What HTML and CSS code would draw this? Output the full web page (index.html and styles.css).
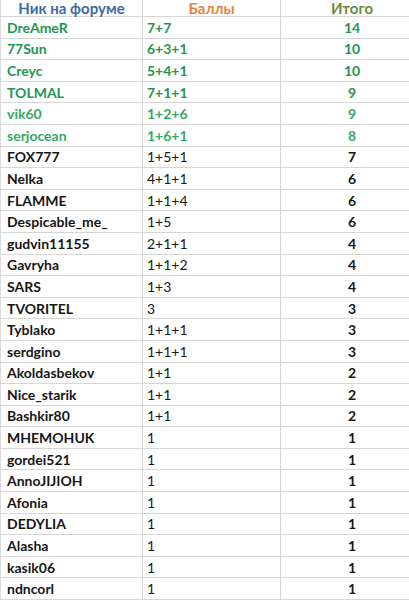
FILE: index.html
```html
<!DOCTYPE html>
<html>
<head>
<meta charset="utf-8">
<link rel="stylesheet" href="styles.css">
</head>
<body>
<div class="sheet">
  <div class="row head">
    <div class="c name h-blue">Ник на форуме</div>
    <div class="c score h-orange">Баллы</div>
    <div class="c total h-olive">Итого</div>
  </div>
  <div class="row g1"><div class="c name">DreAmeR</div><div class="c score">7+7</div><div class="c total">14</div></div>
  <div class="row g1"><div class="c name">77Sun</div><div class="c score">6+3+1</div><div class="c total">10</div></div>
  <div class="row g1"><div class="c name">Creyc</div><div class="c score">5+4+1</div><div class="c total">10</div></div>
  <div class="row g1"><div class="c name">TOLMAL</div><div class="c score">7+1+1</div><div class="c total">9</div></div>
  <div class="row g2"><div class="c name">vik60</div><div class="c score">1+2+6</div><div class="c total">9</div></div>
  <div class="row g2"><div class="c name">serjocean</div><div class="c score">1+6+1</div><div class="c total">8</div></div>
  <div class="row"><div class="c name">FOX777</div><div class="c score">1+5+1</div><div class="c total">7</div></div>
  <div class="row"><div class="c name">Nelka</div><div class="c score">4+1+1</div><div class="c total">6</div></div>
  <div class="row"><div class="c name">FLAMME</div><div class="c score">1+1+4</div><div class="c total">6</div></div>
  <div class="row"><div class="c name">Despicable_me_</div><div class="c score">1+5</div><div class="c total">6</div></div>
  <div class="row"><div class="c name">gudvin11155</div><div class="c score">2+1+1</div><div class="c total">4</div></div>
  <div class="row"><div class="c name">Gavryha</div><div class="c score">1+1+2</div><div class="c total">4</div></div>
  <div class="row"><div class="c name">SARS</div><div class="c score">1+3</div><div class="c total">4</div></div>
  <div class="row"><div class="c name">TVORITEL</div><div class="c score">3</div><div class="c total">3</div></div>
  <div class="row"><div class="c name">Tyblako</div><div class="c score">1+1+1</div><div class="c total">3</div></div>
  <div class="row"><div class="c name">serdgino</div><div class="c score">1+1+1</div><div class="c total">3</div></div>
  <div class="row"><div class="c name">Akoldasbekov</div><div class="c score">1+1</div><div class="c total">2</div></div>
  <div class="row"><div class="c name">Nice_starik</div><div class="c score">1+1</div><div class="c total">2</div></div>
  <div class="row"><div class="c name">Bashkir80</div><div class="c score">1+1</div><div class="c total">2</div></div>
  <div class="row"><div class="c name">MHEMOHUK</div><div class="c score">1</div><div class="c total">1</div></div>
  <div class="row"><div class="c name">gordei521</div><div class="c score">1</div><div class="c total">1</div></div>
  <div class="row"><div class="c name">AnnoJIJIOH</div><div class="c score">1</div><div class="c total">1</div></div>
  <div class="row"><div class="c name">Afonia</div><div class="c score">1</div><div class="c total">1</div></div>
  <div class="row"><div class="c name">DEDYLIA</div><div class="c score">1</div><div class="c total">1</div></div>
  <div class="row"><div class="c name">Alasha</div><div class="c score">1</div><div class="c total">1</div></div>
  <div class="row"><div class="c name">kasik06</div><div class="c score">1</div><div class="c total">1</div></div>
  <div class="row"><div class="c name">ndncorl</div><div class="c score">1</div><div class="c total">1</div></div>
</div>
</body>
</html>
```

FILE: styles.css
```css
html, body {
  margin: 0;
  padding: 0;
  background: #ffffff;
  overflow: hidden;
}
.sheet {
  width: 423px;
  font-family: Lato, "Open Sans", sans-serif;
  font-size: 14px;
  color: #161616;
}
.row {
  display: grid;
  grid-template-columns: 143px 138px 142px;
  height: 21.6px;
  box-sizing: border-box;
  border-bottom: 1px solid #d6d6d6;
}
.c {
  display: flex;
  align-items: center;
  box-sizing: border-box;
  white-space: nowrap;
  line-height: 1;
}
.name {
  padding-left: 6px;
  font-weight: 700;
  border-left: 1px solid #dcdcdc;
  border-right: 1px solid #d6d6d6;
  padding-top: 1px;
}
.score {
  padding-left: 4px;
  font-weight: 400;
  border-right: 1px solid #d6d6d6;
  padding-top: 1px;
}
.total {
  justify-content: center;
  font-weight: 700;
  padding-top: 1px;
}
.row.head {
  height: 17px;
}
.head .c {
  justify-content: center;
  padding-left: 0;
  padding-top: 0;
  font-size: 15px;
  font-weight: 700;
}
.h-blue { color: #3b6aa3; }
.h-orange { color: #e8833f; }
.h-olive { color: #6e8c3a; }
.g1 .c { color: #249553; font-weight: 700; }
.g2 .c { color: #35a863; font-weight: 700; }
```
